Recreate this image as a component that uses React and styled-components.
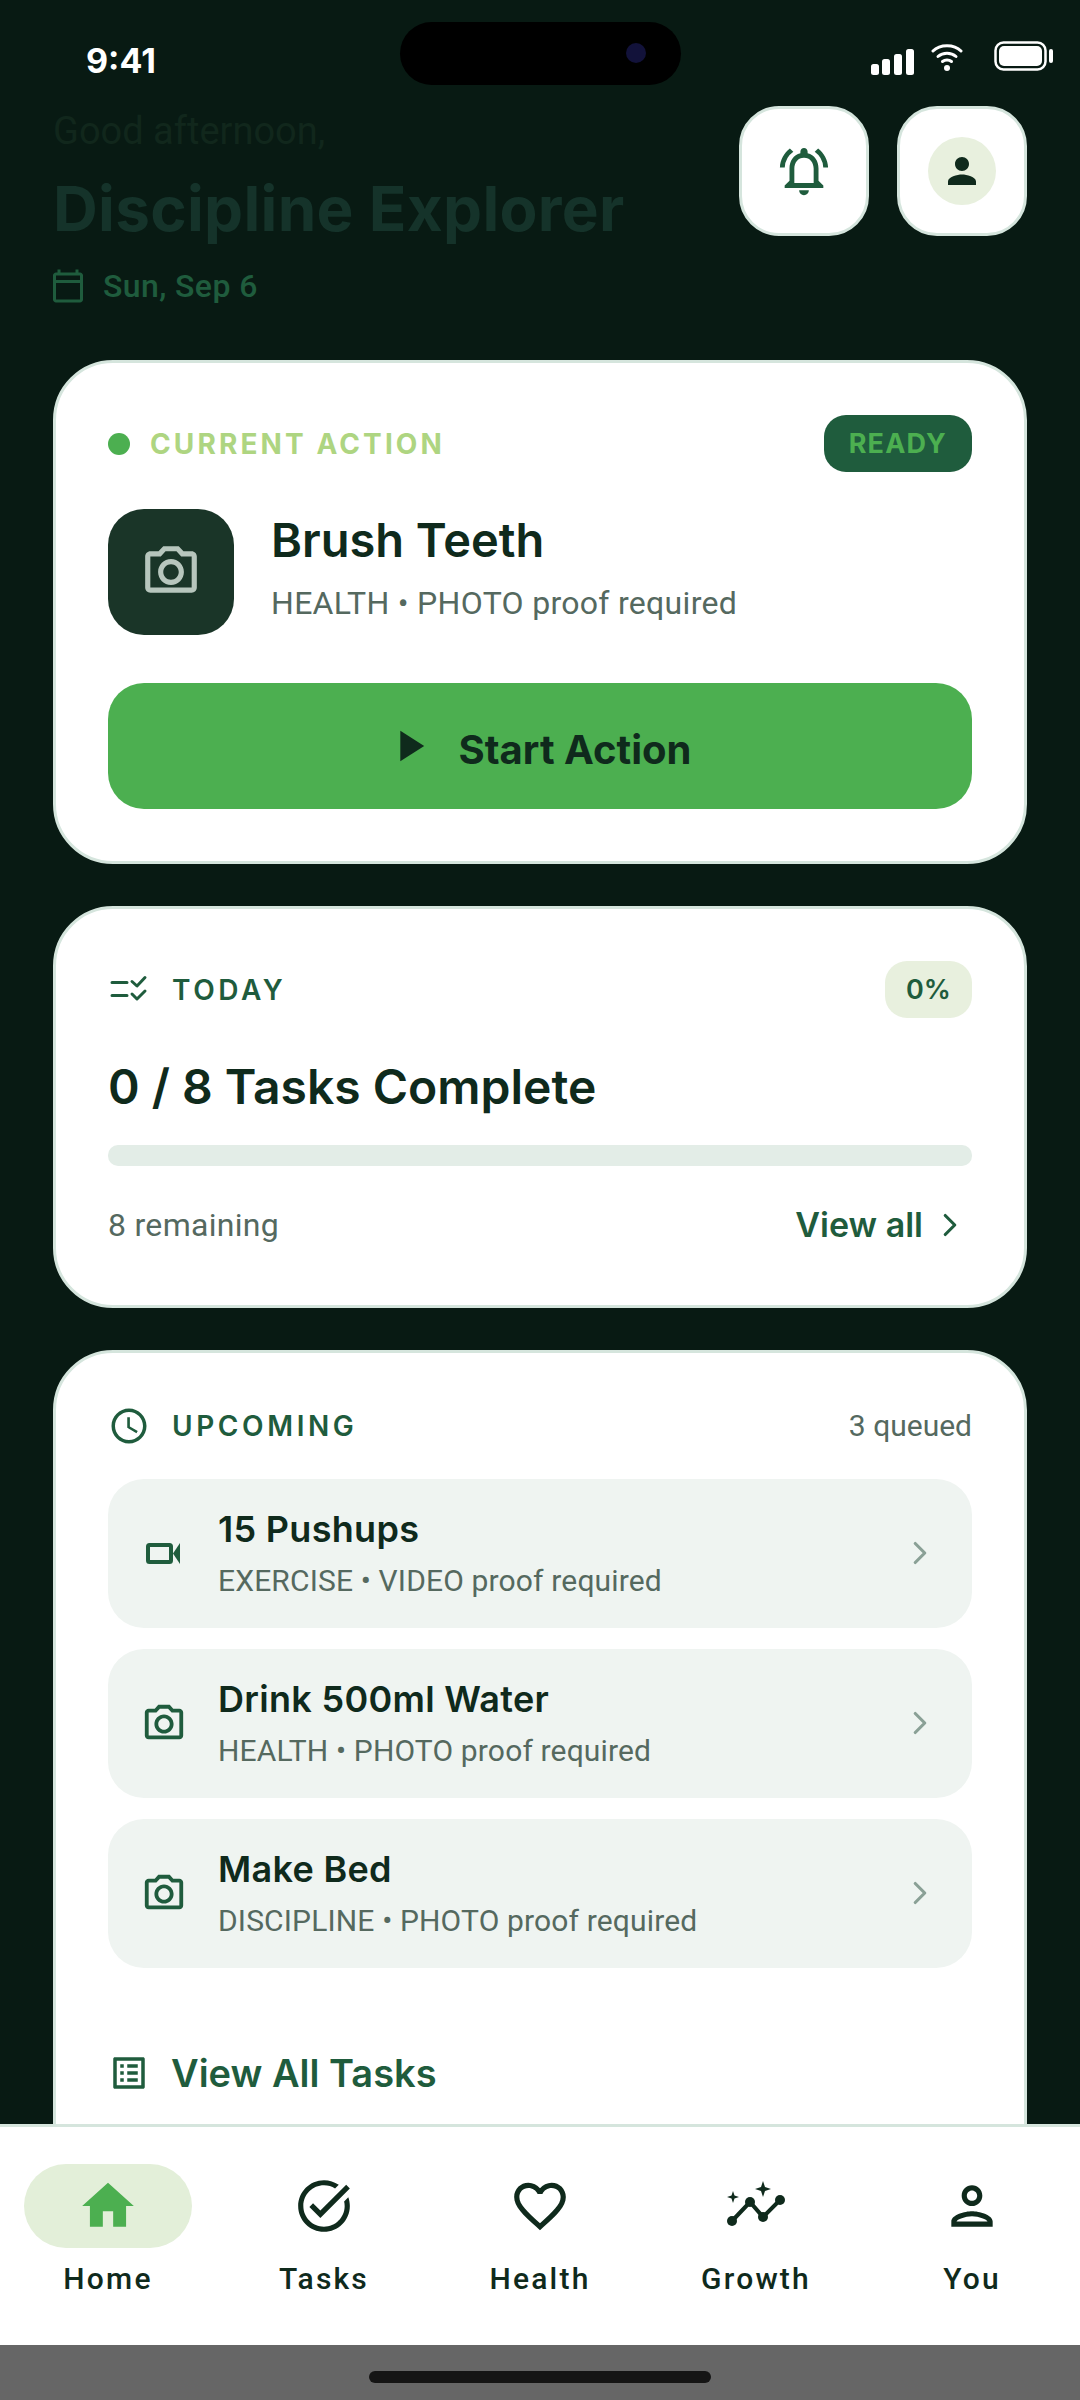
import React from "react";
import styled, { createGlobalStyle } from "styled-components";
import { ChevronRight } from "lucide-react";
import {
  MdOutlineNotificationsActive,
  MdPerson,
  MdOutlineCalendarToday,
  MdOutlinePhotoCamera,
  MdPlayArrow,
  MdOutlineSchedule,
  MdOutlineListAlt,
  MdHome,
  MdOutlineTaskAlt,
  MdFavoriteBorder,
  MdOutlinePerson,
} from "react-icons/md";

const heading = `"Inter", "Liberation Sans", sans-serif`;
const body = `"Roboto", "Liberation Sans", sans-serif`;

const GlobalStyle = createGlobalStyle`
  html, body { margin: 0; padding: 0; background: #081a13; }
  * { box-sizing: border-box; }
`;

const Screen = styled.div`
  position: relative;
  width: 1080px;
  height: 2400px;
  display: flex;
  flex-direction: column;
  overflow: hidden;
  background: #081a13;
  font-family: ${body};
`;

const StatusBar = styled.div`
  height: 106px;
  flex: none;
  display: flex;
  justify-content: space-between;
  align-items: flex-start;
  padding: 41px 26px 0 86px;
`;

const Time = styled.div`
  color: #fff;
  font-size: 34px;
  line-height: 40px;
  font-weight: 700;
  font-family: ${heading};
`;

const Island = styled.div`
  position: absolute;
  left: 400px;
  top: 22px;
  width: 281px;
  height: 63px;
  border-radius: 32px;
  background: #000;
  &::after {
    content: "";
    position: absolute;
    right: 35px;
    top: 21px;
    width: 20px;
    height: 20px;
    border-radius: 50%;
    background: #12123a;
  }
`;

const StatusIcons = styled.div`
  display: flex;
  align-items: flex-start;
  gap: 15px;
`;

const Main = styled.div`
  flex: 1;
  min-height: 0;
  overflow: hidden;
  display: flex;
  flex-direction: column;
`;

const Header = styled.div`
  display: flex;
  justify-content: space-between;
  padding: 0 53px 54px;
  height: 254px;
  flex: none;
`;

const Greeting = styled.div`
  color: #11271c;
  font-size: 38px;
  line-height: 48px;
  margin-top: 1px;
`;

const Title = styled.div`
  color: #15332a;
  font-family: ${heading};
  font-weight: 700;
  font-size: 62px;
  letter-spacing: 0.3px;
  line-height: 72px;
  margin-top: 18px;
`;

const DateRow = styled.div`
  display: flex;
  align-items: center;
  gap: 17px;
  margin-top: 23px;
  color: #1f5c3d;
  font-size: 32px;
  font-weight: 500;
  letter-spacing: 0.4px;
  line-height: 36px;
  svg { font-size: 36px; margin-left: -3px; }
`;

const HeaderActions = styled.div`
  display: flex;
  gap: 28px;
`;

const IconButton = styled.div`
  width: 130px;
  height: 130px;
  border-radius: 40px;
  border: 3px solid #d5e5dd;
  background: #fff;
  display: flex;
  align-items: center;
  justify-content: center;
  color: #1f5c3d;
  font-size: 58px;
`;

const Avatar = styled.div`
  width: 68px;
  height: 68px;
  border-radius: 50%;
  background: #e8f0de;
  display: flex;
  align-items: center;
  justify-content: center;
  color: #0f2a1c;
  font-size: 42px;
`;

const Cards = styled.div`
  display: flex;
  flex-direction: column;
  gap: 42px;
  padding: 0 53px;
`;

const Card = styled.section`
  background: #fff;
  border: 3px solid #d5e5dd;
  border-radius: 60px;
  padding: 52px;
  padding-bottom: ${(p) => p.$bottom || 52}px;
`;

const SpacedRow = styled.div`
  display: flex;
  align-items: center;
  justify-content: space-between;
`;

const CardLabelRow = styled.div`
  display: flex;
  align-items: center;
  gap: ${(p) => p.$gap || 22}px;
`;

const Dot = styled.span`
  width: 22px;
  height: 22px;
  border-radius: 50%;
  background: #4caf50;
`;

const ActionLabel = styled.span`
  color: #aed581;
  font-family: ${heading};
  font-weight: 700;
  font-size: 28px;
  letter-spacing: 3.1px;
`;

const Badge = styled.span`
  height: 57px;
  padding: 0 ${(p) => (p.$soft ? 21 : 25)}px;
  display: flex;
  align-items: center;
  border-radius: 22px;
  background: ${(p) => (p.$soft ? "#e8f0de" : "#1f5c3d")};
  color: ${(p) => (p.$soft ? "#1f5c3d" : "#4caf50")};
  font-family: ${heading};
  font-weight: ${(p) => (p.$soft ? 600 : 700)};
  font-size: 27px;
  letter-spacing: ${(p) => (p.$soft ? 0 : 1.2)}px;
`;

const ActionRow = styled.div`
  display: flex;
  align-items: center;
  gap: 37px;
  margin-top: 37px;
`;

const ActionTile = styled.div`
  width: 126px;
  height: 126px;
  border-radius: 36px;
  background: #1a3528;
  display: flex;
  align-items: center;
  justify-content: center;
  color: #b7c6bd;
  font-size: 62px;
`;

const ActionText = styled.div`
  padding-bottom: 12px;
`;

const ActionName = styled.div`
  color: #0f2a1c;
  font-family: ${heading};
  font-weight: 600;
  font-size: 47px;
  line-height: 56px;
`;

const Meta = styled.div`
  color: #55695f;
  font-size: ${(p) => p.$size || 32}px;
  letter-spacing: ${(p) => p.$spacing ?? 0.3}px;
  line-height: 36px;
  margin-top: ${(p) => p.$top || 0}px;
`;

const StartButton = styled.div`
  height: 126px;
  margin-top: 48px;
  padding-top: 7px;
  border-radius: 36px;
  background: #4caf50;
  color: #0f2a1c;
  display: flex;
  align-items: center;
  justify-content: center;
  gap: 24px;
  font-family: ${heading};
  font-weight: 700;
  font-size: 40px;
  svg { font-size: 52px; margin-left: -6px; margin-top: -8px; }
`;

const SectionLabel = styled.span`
  color: #1f5c3d;
  font-family: ${heading};
  font-weight: 600;
  font-size: 28px;
  letter-spacing: 3.6px;
`;

const SectionIcon = styled.span`
  display: flex;
  color: #1f5c3d;
  font-size: 42px;
`;

const TaskCount = styled.div`
  color: #0f2a1c;
  font-family: ${heading};
  font-weight: 600;
  font-size: 48px;
  line-height: 56px;
  margin-top: 41px;
`;

const Track = styled.div`
  height: 21px;
  margin-top: 30px;
  border-radius: 10px;
  background: #e3ede7;
`;

const FooterRow = styled(SpacedRow)`
  margin-top: 40px;
  margin-bottom: 9px;
`;

const ViewLink = styled.div`
  display: flex;
  align-items: center;
  gap: 8px;
  color: #1f5c3d;
  font-family: ${heading};
  font-weight: 600;
  font-size: 34px;
  line-height: 36px;
  svg { margin-right: 3px; }
`;

const UpcomingList = styled.div`
  display: flex;
  flex-direction: column;
  gap: 21px;
  margin-top: 32px;
`;

const UpcomingRow = styled.div`
  height: 149px;
  border-radius: 36px;
  background: #eff4f1;
  display: flex;
  align-items: center;
  padding: 0 33px 0 33px;
  gap: 31px;
`;

const RowIcon = styled.span`
  display: flex;
  color: #1f5c3d;
  font-size: 46px;
`;

const RowText = styled.div`
  flex: 1;
`;

const RowTitle = styled.div`
  color: #0f2a1c;
  font-family: ${heading};
  font-weight: 600;
  font-size: 36px;
  letter-spacing: 0.3px;
  line-height: 42px;
`;

const RowChevron = styled.span`
  display: flex;
  color: #8aa096;
  margin-top: -2px;
`;

const AllTasks = styled.div`
  display: flex;
  align-items: center;
  gap: 21px;
  margin-top: 83px;
  color: #1f5c3d;
  font-family: ${heading};
  font-weight: 600;
  font-size: 38px;
  line-height: 44px;
  svg { font-size: 42px; }
`;

const Nav = styled.nav`
  flex: none;
  height: 221px;
  border-top: 3px solid #d5e5dd;
  background: #fff;
  display: grid;
  grid-template-columns: repeat(5, 1fr);
  padding-top: 37px;
`;

const NavItem = styled.div`
  display: flex;
  flex-direction: column;
  align-items: center;
  color: #0f2a1c;
  font-size: 30px;
  font-weight: 500;
  letter-spacing: 2.2px;
`;

const NavIcon = styled.span`
  width: 168px;
  height: 84px;
  border-radius: 42px;
  display: flex;
  align-items: center;
  justify-content: center;
  font-size: 62px;
  color: ${(p) => (p.$active ? "#4caf50" : "#0f2a1c")};
  background: ${(p) => (p.$active ? "#e3efd9" : "transparent")};
`;

const NavLabel = styled.span`
  line-height: 36px;
  margin-top: 13px;
`;

const GestureBar = styled.div`
  flex: none;
  height: 55px;
  background: #666;
  display: flex;
  justify-content: center;
  padding-top: 26px;
  &::after {
    content: "";
    width: 342px;
    height: 12px;
    border-radius: 6px;
    background: #151515;
  }
`;

const SignalIcon = () => (
  <svg width="46" height="30" viewBox="0 0 46 30" style={{ marginTop: 6 }} fill="#fff">
    <rect x="1" y="17" width="8" height="11" rx="2.5" />
    <rect x="12" y="12" width="8" height="16" rx="2.5" />
    <rect x="24" y="7" width="8" height="21" rx="2.5" />
    <rect x="36" y="2" width="8" height="26" rx="2.5" />
  </svg>
);

const WifiIcon = () => (
  <svg width="32" height="32" viewBox="0 0 32 32" fill="none" stroke="#fff" strokeWidth="3" strokeLinecap="round">
    <path d="M2 10 C9 3 23 3 30 10" />
    <path d="M7 15.5 C12 11 20 11 25 15.5" />
    <path d="M11.5 20.5 C14 18.5 18 18.5 20.5 20.5" />
    <circle cx="16" cy="27" r="3" fill="#fff" stroke="none" />
  </svg>
);

const BatteryIcon = () => (
  <svg width="60" height="30" viewBox="0 0 60 30" fill="none" style={{ marginLeft: 16 }}>
    <rect x="1.5" y="1.5" width="50" height="27" rx="8" stroke="#fff" strokeWidth="2.5" />
    <rect x="5" y="5" width="43" height="20" rx="5" fill="#fff" />
    <rect x="55" y="8" width="4" height="14" rx="2" fill="#fff" />
  </svg>
);

const ChecklistIcon = () => (
  <svg width="42" height="42" viewBox="0 0 42 42" fill="none" stroke="currentColor" strokeWidth="3" strokeLinecap="round" strokeLinejoin="round">
    <path d="M4 13.5H19M4 26.5H19" />
    <path d="M24 12.5L29 17L37 8.5M24 25L29 30L37 22" />
  </svg>
);

const VideoIcon = () => (
  <svg width="46" height="46" viewBox="0 0 46 46" fill="none">
    <rect x="7" y="14" width="23" height="17" rx="1.5" stroke="currentColor" strokeWidth="4" />
    <path d="M32 22.5L39 12V33Z" fill="currentColor" />
  </svg>
);

const GrowthIcon = () => (
  <svg width="62" height="62" viewBox="0 0 62 62" fill="currentColor">
    <path d="M7 46L25 27L38 42L55 25" fill="none" stroke="currentColor" strokeWidth="4" />
    <circle cx="7" cy="46" r="5" />
    <circle cx="25" cy="27" r="5" />
    <circle cx="38" cy="42" r="5" />
    <circle cx="55" cy="25" r="5" />
    <path d="M38 6L40 12L46 14L40 16L38 22L36 16L30 14L36 12Z" />
    <path d="M8 16L9.5 20.5L14 22L9.5 23.5L8 28L6.5 23.5L2 22L6.5 20.5Z" />
  </svg>
);

const upcoming = [
  { title: "15 Pushups", meta: "EXERCISE • VIDEO proof required", Icon: VideoIcon },
  { title: "Drink 500ml Water", meta: "HEALTH • PHOTO proof required", Icon: MdOutlinePhotoCamera },
  { title: "Make Bed", meta: "DISCIPLINE • PHOTO proof required", Icon: MdOutlinePhotoCamera },
];

const tabs = [
  { label: "Home", Icon: MdHome, active: true },
  { label: "Tasks", Icon: MdOutlineTaskAlt },
  { label: "Health", Icon: MdFavoriteBorder },
  { label: "Growth", Icon: GrowthIcon },
  { label: "You", Icon: MdOutlinePerson },
];

export default function App() {
  return (
    <Screen>
      <GlobalStyle />
      <Island />
      <StatusBar>
        <Time>9:41</Time>
        <StatusIcons>
          <SignalIcon />
          <WifiIcon />
          <BatteryIcon />
        </StatusIcons>
      </StatusBar>
      <Main>
        <Header>
          <div>
            <Greeting>Good afternoon,</Greeting>
            <Title>Discipline Explorer</Title>
            <DateRow>
              <MdOutlineCalendarToday />
              Sun, Sep 6
            </DateRow>
          </div>
          <HeaderActions>
            <IconButton>
              <MdOutlineNotificationsActive />
            </IconButton>
            <IconButton>
              <Avatar>
                <MdPerson />
              </Avatar>
            </IconButton>
          </HeaderActions>
        </Header>
        <Cards>
          <Card>
            <SpacedRow>
              <CardLabelRow $gap={20}>
                <Dot />
                <ActionLabel>CURRENT ACTION</ActionLabel>
              </CardLabelRow>
              <Badge>READY</Badge>
            </SpacedRow>
            <ActionRow>
              <ActionTile>
                <MdOutlinePhotoCamera />
              </ActionTile>
              <ActionText>
                <ActionName>Brush Teeth</ActionName>
                <Meta $top={17}>HEALTH • PHOTO proof required</Meta>
              </ActionText>
            </ActionRow>
            <StartButton>
              <MdPlayArrow />
              Start Action
            </StartButton>
          </Card>
          <Card>
            <SpacedRow>
              <CardLabelRow>
                <SectionIcon>
                  <ChecklistIcon />
                </SectionIcon>
                <SectionLabel>TODAY</SectionLabel>
              </CardLabelRow>
              <Badge $soft>0%</Badge>
            </SpacedRow>
            <TaskCount>0 / 8 Tasks Complete</TaskCount>
            <Track />
            <FooterRow>
              <Meta>8 remaining</Meta>
              <ViewLink>
                View all
                <ChevronRight size={38} strokeWidth={2} />
              </ViewLink>
            </FooterRow>
          </Card>
          <Card $bottom={160}>
            <SpacedRow>
              <CardLabelRow>
                <SectionIcon>
                  <MdOutlineSchedule />
                </SectionIcon>
                <SectionLabel>UPCOMING</SectionLabel>
              </CardLabelRow>
              <Meta $size={30} $spacing={0}>3 queued</Meta>
            </SpacedRow>
            <UpcomingList>
              {upcoming.map(({ title, meta, Icon }) => (
                <UpcomingRow key={title}>
                  <RowIcon>
                    <Icon />
                  </RowIcon>
                  <RowText>
                    <RowTitle>{title}</RowTitle>
                    <Meta $size={30} $spacing={0.15} $top={13}>{meta}</Meta>
                  </RowText>
                  <RowChevron>
                    <ChevronRight size={38} strokeWidth={2} />
                  </RowChevron>
                </UpcomingRow>
              ))}
            </UpcomingList>
            <AllTasks>
              <MdOutlineListAlt />
              View All Tasks
            </AllTasks>
          </Card>
        </Cards>
      </Main>
      <Nav>
        {tabs.map(({ label, Icon, active }) => (
          <NavItem key={label}>
            <NavIcon $active={active}>
              <Icon />
            </NavIcon>
            <NavLabel>{label}</NavLabel>
          </NavItem>
        ))}
      </Nav>
      <GestureBar />
    </Screen>
  );
}
